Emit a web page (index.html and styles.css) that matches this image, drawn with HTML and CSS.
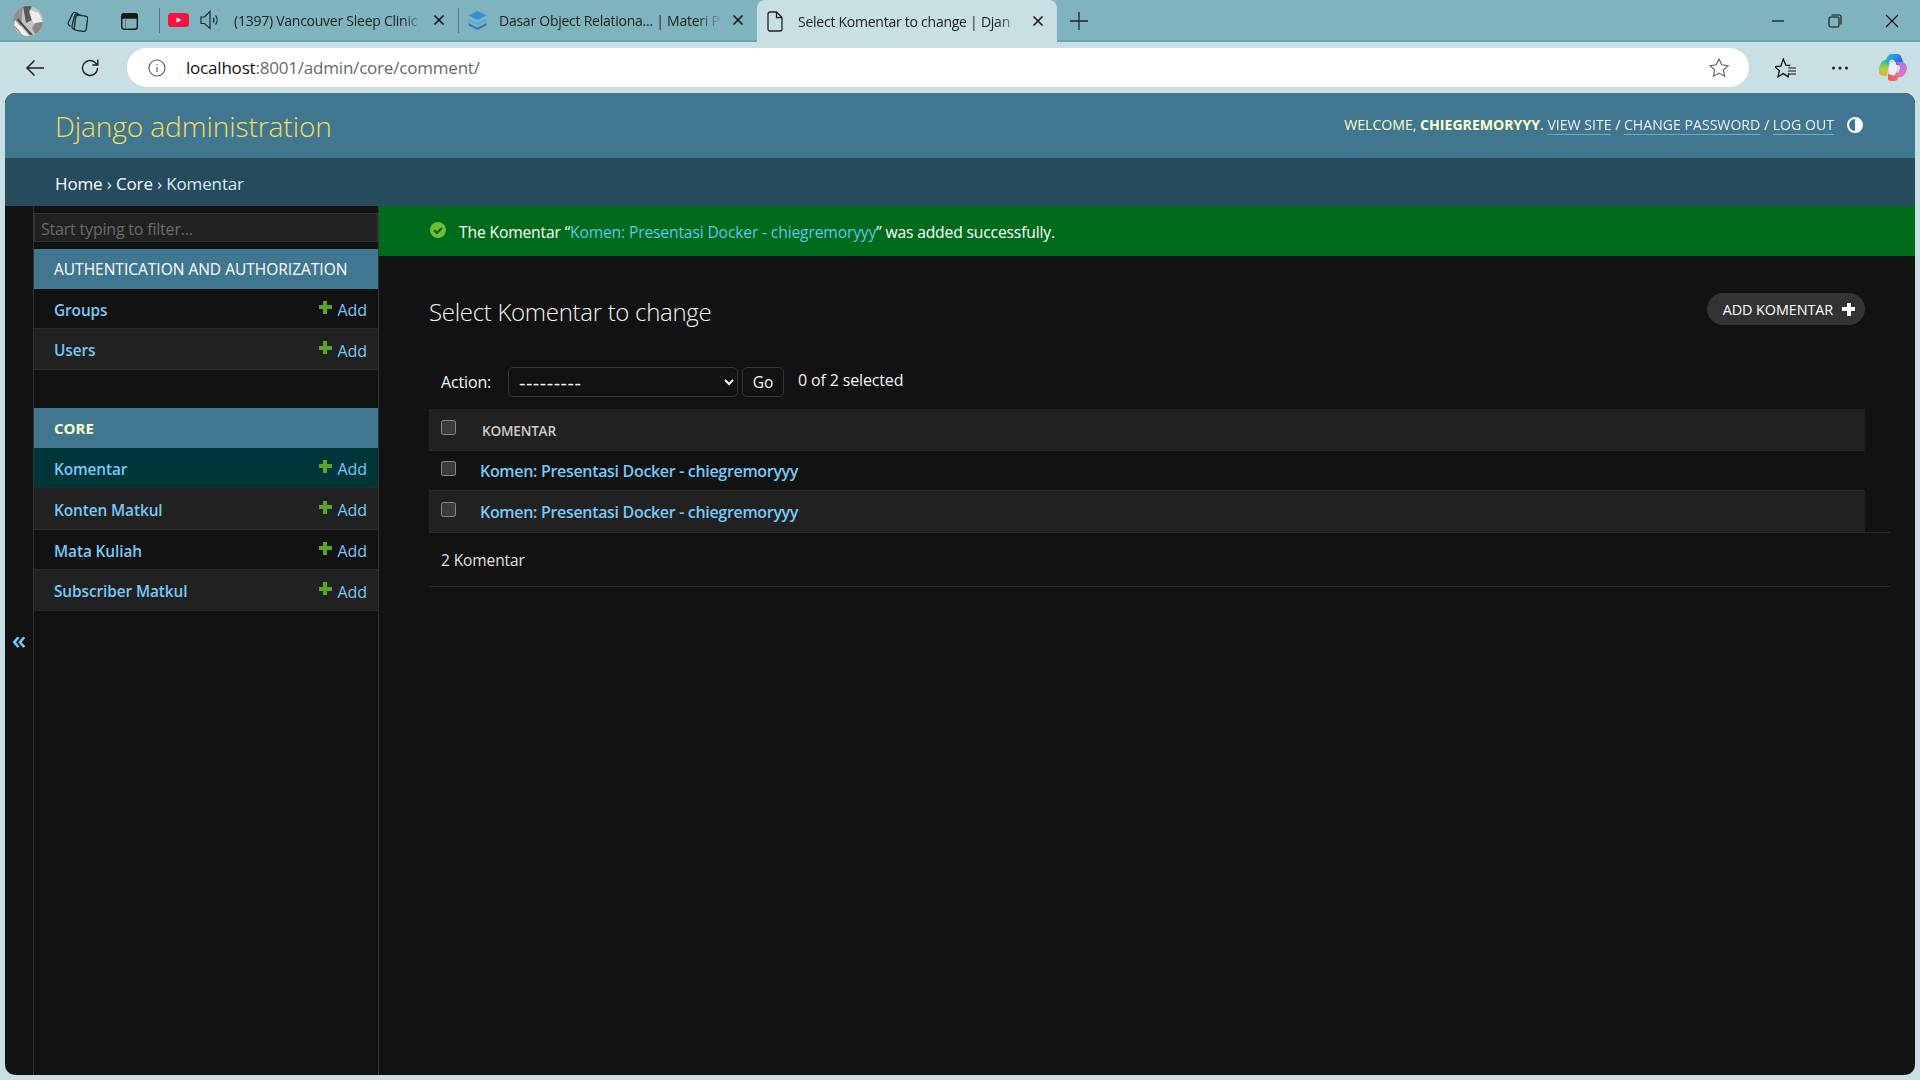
FILE: index.html
```html
<!DOCTYPE html>
<html lang="en">
<head>
  <meta charset="UTF-8" />
  <meta name="viewport" content="width=device-width, initial-scale=1.0" />
  <title>Select Komentar to change | Django site admin</title>
  <link rel="stylesheet" href="styles.css">
</head>
<body>
  <!-- Browser tabs -->
  <div class="tabbar">
    <svg class="avatar" viewBox="0 0 30 30">
      <defs>
        <clipPath id="avclip"><circle cx="15" cy="15" r="15"/></clipPath>
      </defs>
      <g clip-path="url(#avclip)">
        <rect width="30" height="30" fill="#c4c4c4"/>
        <path d="M0 0h10L7 30H0z" fill="#8f8f8f"/>
        <path d="M10 0h9l-3 6 3 8-6 3z" fill="#5a5a5a"/>
        <path d="M17 4l9 3 3 9-8 2-3-6z" fill="#ececec"/>
        <path d="M2 14l14 16h-5L1 19zM1 21l8 9H4L0 25z" fill="#f4f4f4"/>
        <path d="M5 12l15 17h-3L4 14z" fill="#4a4a4a"/>
        <path d="M22 17l8-1v9l-7 5-4-8z" fill="#868686"/>
      </g>
    </svg>
    <svg class="bar-icon workspaces" viewBox="0 0 21 21" fill="none" stroke="#1f2a2c" stroke-width="1.300">
      <rect x="8" y="4.500" width="12" height="15.500" rx="2.500" transform="rotate(8 14 12)"/>
      <path d="M7.500 18.500l-1.200-.6a2.500 2.500 0 0 1-1.300-2.900L7.500 5a2.500 2.500 0 0 1 3-1.700l3.500 1"/>
      <path d="M3.500 15.500l-1.400-1.200a2.500 2.500 0 0 1-.6-3L5.200 3.200A2.500 2.500 0 0 1 8.400 1.600l3 1.200"/>
    </svg>
    <svg class="bar-icon tab-actions" viewBox="0 0 17 17" fill="none" stroke="#1a1a1a" stroke-width="1.400">
      <rect x="0.700" y="0.700" width="15.600" height="15.600" rx="2.500"/>
      <path d="M0.700 3.200a2.500 2.500 0 0 1 2.500-2.500h10.600a2.500 2.500 0 0 1 2.500 2.500v1.800H0.700z" fill="#1a1a1a"/>
      <path d="M4.500 5v11" stroke="#4f6b70" stroke-width="0.800"/>
    </svg>
    <span class="tab-sep first"></span>

    <div class="tab">
      <svg class="yt" viewBox="0 0 21 14"><rect width="21" height="14" rx="3.500" fill="#f5143f"/><path d="M8.500 4.500l5 2.500-5 2.500z" fill="#fff"/></svg>
      <svg class="speaker" viewBox="0 0 20 20" fill="none" stroke="#1f2a2c" stroke-width="1.200"><path d="M1 7v6.500h3.500l5.500 5V1.500L4.500 7z"/><path d="M13 7.500a4 4 0 0 1 0 5M15.500 5.500a7 7 0 0 1 0 9"/></svg>
      <span class="tab-title audio">(1397) Vancouver Sleep Clinic</span>
      <svg class="tab-close" viewBox="0 0 12 12"><path d="M1.500 1.500l9 9M10.500 1.500l-9 9"/></svg>
    </div>
    <span class="tab-sep"></span>
    <div class="tab second">
      <svg class="stack" viewBox="0 0 21 21"><path d="M10.500 1l9 4.500-9 4.500-9-4.500z" fill="#3b8ed8"/><path d="M1.500 8.500l9 4.500 9-4.500v2.500l-9 4.500-9-4.500z" fill="#5aa6e6"/><path d="M1.500 13l9 4.500 9-4.500v2.500l-9 4.500-9-4.500z" fill="#2f7cc4"/></svg>
      <span class="tab-title">Dasar Object Relationa... | Materi P</span>
      <svg class="tab-close" viewBox="0 0 12 12"><path d="M1.500 1.500l9 9M10.500 1.500l-9 9"/></svg>
    </div>
    <div class="tab active">
      <svg class="doc" viewBox="0 0 16 21" fill="none" stroke="#222" stroke-width="1.300"><path d="M2.500 1h7l5.500 5.500V18a2 2 0 0 1-2 2H2.500a2 2 0 0 1-1.500-2V3a2 2 0 0 1 1.500-2z"/><path d="M9.500 1v5.500H15"/></svg>
      <span class="tab-title">Select Komentar to change | Djan</span>
      <svg class="tab-close" viewBox="0 0 12 12"><path d="M1.500 1.500l9 9M10.500 1.500l-9 9"/></svg>
    </div>
    <svg class="new-tab" viewBox="0 0 18 18"><path d="M9 0v18M0 9h18" stroke="#222" stroke-width="1.300"/></svg>

    <div class="window-controls">
      <svg viewBox="0 0 14 14"><path d="M1 7h12" stroke="#111" stroke-width="1.200"/></svg>
      <svg viewBox="0 0 14 14" fill="none" stroke="#111" stroke-width="1.100"><rect x="1" y="3" width="10" height="10" rx="1.800"/><path d="M3.500 1h7.500a2 2 0 0 1 2 2v7.500"/></svg>
      <svg viewBox="0 0 14 14"><path d="M1 1l12 12M13 1L1 13" stroke="#111" stroke-width="1.200"/></svg>
    </div>
  </div>

  <!-- Address bar -->
  <div class="toolbar">
    <svg class="tool back" viewBox="0 0 20 20" fill="none" stroke="#222" stroke-width="1.500"><path d="M19 10H2M9.500 2.500L2 10l7.500 7.500"/></svg>
    <svg class="tool reload" viewBox="0 0 20 20" fill="none" stroke="#222" stroke-width="1.400"><path d="M17.500 10a7.500 7.500 0 1 1-2.500-5.600l2.500 2.300"/><path d="M17.800 1.500v5.500h-5.500"/></svg>
    <div class="addressbar">
      <svg class="info" viewBox="0 0 18 18" fill="none" stroke="#555" stroke-width="1.100"><circle cx="9" cy="9" r="8"/><path d="M9 8v5M9 5v1.300"/></svg>
      <span class="url"><span class="host">localhost</span>:8001/admin/core/comment/</span>
      <svg class="star" viewBox="0 0 22 22" fill="none" stroke="#666" stroke-width="1.200"><path d="M11 2l2.700 5.800 6.300.8-4.600 4.300 1.200 6.300L11 16.100l-5.600 3.100 1.200-6.300L2 8.600l6.300-.8z"/></svg>
    </div>
    <svg class="tool favs" viewBox="0 0 21 20" fill="none" stroke="#111" stroke-width="1.300"><path d="M13.500 15.500l-.2 3.300-5-3.200-5.300 3.200 1.300-6-4.500-4.100 6-.6L8.300 1l2.500 6.100 4.500.4"/><path d="M13 10h8M13 13h8M13 16h8" stroke-width="1.200"/></svg>
    <svg class="tool dots" viewBox="0 0 18 4"><circle cx="2.500" cy="2" r="1.500"/><circle cx="9" cy="2" r="1.500"/><circle cx="15.500" cy="2" r="1.500"/></svg>
    <svg class="copilot" viewBox="0 0 28 27">
      <defs>
        <linearGradient id="cp1" x1="0" y1="0" x2="1" y2="0.600"><stop offset="0" stop-color="#22c4e0"/><stop offset="1" stop-color="#2a5fe0"/></linearGradient>
        <linearGradient id="cp2" x1="0" y1="0" x2="1" y2="1"><stop offset="0" stop-color="#a06cf0"/><stop offset="1" stop-color="#f078c0"/></linearGradient>
        <linearGradient id="cp3" x1="0" y1="0" x2="0" y2="1"><stop offset="0" stop-color="#2cc070"/><stop offset="0.600" stop-color="#b8d040"/><stop offset="1" stop-color="#f8a040"/></linearGradient>
        <linearGradient id="cp4" x1="0" y1="0" x2="1" y2="0"><stop offset="0" stop-color="#f05a4a"/><stop offset="1" stop-color="#f07090"/></linearGradient>
      </defs>
      <path d="M7 6C4 6 2 8 1 11L0 15c-1 4 1 7 5 7h3l2-12z" fill="url(#cp3)"/>
      <path d="M12 0h6c2 0 4 1 4.500 3.500L25 11h-8l-1.500-4c-.5-1-1-1.500-2.500-1.500-1.500 0-2.500 1-3 2.500l-1 3-2-5c1-3 3-6 5-6z" fill="url(#cp1)"/>
      <path d="M17 8h5c3 0 5.500 2 6 5 .3 4-2 8-5 10h-5l3-8c.5-2 0-3-1-3.500z" fill="url(#cp2)"/>
      <path d="M9 20l6 2 3-4 3 2-2 5c-.8 1.300-2 2-3.500 2H12c-2 0-3.500-1-3-3z" fill="url(#cp4)"/>
      <path d="M12 8h4.500l2 6-2.500 6h-5l-1-6z" fill="#f0ecfa"/>
    </svg>
  </div>

  <!-- Admin page -->
  <div class="admin">
    <header class="site-header">
      <h1 class="brand">Django administration</h1>
      <div class="user-tools">
        <span>Welcome, <strong>chiegremoryyy</strong>. <a href="#">View site</a> / <a href="#">Change password</a> / <a href="#">Log out</a></span>
        <svg class="theme" viewBox="0 0 16 16"><circle cx="8" cy="8" r="7" fill="none" stroke="#fff" stroke-width="2"/><path d="M8 1a7 7 0 0 1 0 14z" fill="#fff"/></svg>
      </div>
    </header>
    <nav class="breadcrumbs"><a href="#">Home</a> › <a href="#">Core</a> › Komentar</nav>

    <div class="main">
      <div class="toggle-col"><span class="toggle">«</span></div>
      <aside class="sidebar">
        <input class="nav-filter" type="text" placeholder="Start typing to filter..." />

        <div class="app-caption">Authentication and Authorization</div>
        <div class="model-row"><a class="model" href="#">Groups</a><a class="add" href="#"><i class="plus"></i>Add</a></div>
        <div class="model-row alt"><a class="model" href="#">Users</a><a class="add" href="#"><i class="plus"></i>Add</a></div>

        <div class="app-caption current">Core</div>
        <div class="model-row selected"><a class="model" href="#">Komentar</a><a class="add" href="#"><i class="plus"></i>Add</a></div>
        <div class="model-row alt tall"><a class="model" href="#">Konten Matkul</a><a class="add" href="#"><i class="plus"></i>Add</a></div>
        <div class="model-row"><a class="model" href="#">Mata Kuliah</a><a class="add" href="#"><i class="plus"></i>Add</a></div>
        <div class="model-row alt"><a class="model" href="#">Subscriber Matkul</a><a class="add" href="#"><i class="plus"></i>Add</a></div>
      </aside>

      <main class="content">
        <div class="message">
          <svg class="ok" viewBox="0 0 16 16"><circle cx="8" cy="8" r="8" fill="#6cbf2f"/><path d="M4.200 8.300l2.700 2.700 4.900-5" fill="none" stroke="#0b5a14" stroke-width="2"/></svg>
          <span>The Komentar “<a href="#">Komen: Presentasi Docker - chiegremoryyy</a>” was added successfully.</span>
        </div>

        <div class="page">
          <div class="page-head">
            <h2 class="page-title">Select Komentar to change</h2>
            <a class="add-btn" href="#">Add Komentar<i class="add-plus"></i></a>
          </div>

          <form class="actions">
            <label class="action-label">Action:</label>
            <select class="action-select"><option>---------</option></select>
            <button class="go" type="button">Go</button>
            <span class="counter">0 of 2 selected</span>
          </form>

          <table class="results">
            <thead>
              <tr><th class="check"><input type="checkbox" /></th><th class="col-name">Komentar</th></tr>
            </thead>
            <tbody>
              <tr><td class="check"><input type="checkbox" /></td><td><a href="#">Komen: Presentasi Docker - chiegremoryyy</a></td></tr>
              <tr class="alt"><td class="check"><input type="checkbox" /></td><td><a href="#">Komen: Presentasi Docker - chiegremoryyy</a></td></tr>
            </tbody>
          </table>
          <p class="paginator">2 Komentar</p>
        </div>
      </main>
    </div>
  </div>
</body>
</html>
```

FILE: styles.css
```css
* {
  margin: 0;
  padding: 0;
  box-sizing: border-box;
}

html, body {
  height: 100%;
  overflow: hidden;
  font-family: 'Open Sans', 'Noto Sans', sans-serif;
  background: #c8dfe3;
  color: #111;
}

body {
  display: flex;
  flex-direction: column;
}

a {
  text-decoration: none;
}

/* Browser chrome */
.tabbar {
  height: 42px;
  flex: none;
  display: flex;
  align-items: center;
  background: #7fb4bf;
  box-shadow: inset 0 -2px 0 #6fa3ae;
  font-size: 14px;
  letter-spacing: -0.25px;
  color: #222;
}

.avatar {
  width: 30px;
  height: 30px;
  margin-left: 13px;
}

.bar-icon.workspaces {
  width: 21px;
  height: 21px;
  margin-left: 24px;
}

.bar-icon.tab-actions {
  width: 17px;
  height: 17px;
  margin-left: 33px;
}

.tab-sep {
  width: 1px;
  height: 25px;
  background: #52777f;
  margin-bottom: 2px;
}

.tab-sep.first {
  margin-left: 21px;
}

.tab {
  display: flex;
  align-items: center;
  width: 298px;
  height: 42px;
  padding: 0 13px 2px 8px;
}

.tab.second {
  width: 298px;
  padding-left: 8px;
}

.tab.active {
  width: 300px;
  background: #c8dfe3;
  border-radius: 8px 8px 0 0;
  padding-bottom: 0;
  padding-left: 10px;
}

.yt {
  width: 21px;
  height: 14px;
  flex: none;
}

.speaker {
  width: 20px;
  height: 20px;
  flex: none;
  margin: 0 14px 0 11px;
}

.stack {
  width: 21px;
  height: 21px;
  flex: none;
  margin-right: 11px;
}

.doc {
  width: 16px;
  height: 21px;
  flex: none;
  margin-right: 15px;
}

.tab-title {
  flex: 1;
  min-width: 0;
  white-space: nowrap;
  overflow: hidden;
  -webkit-mask-image: linear-gradient(to right, #000 88%, transparent 100%);
  mask-image: linear-gradient(to right, #000 88%, transparent 100%);
}

.tab-close {
  width: 12px;
  height: 12px;
  flex: none;
  margin-left: 8px;
  stroke: #111;
  stroke-width: 1.500;
}

.new-tab {
  width: 18px;
  height: 18px;
  margin-left: 13px;
}

.window-controls {
  margin-left: auto;
  display: flex;
  align-items: center;
  gap: 43px;
  padding-right: 21px;
}

.window-controls svg {
  width: 14px;
  height: 14px;
}

.toolbar {
  height: 51px;
  flex: none;
  display: flex;
  align-items: center;
}

.tool {
  flex: none;
}

.tool.back {
  width: 20px;
  height: 20px;
  margin-left: 25px;
}

.tool.reload {
  width: 20px;
  height: 20px;
  margin-left: 35px;
}

.addressbar {
  width: 1622px;
  height: 39px;
  margin-left: 27px;
  flex: none;
  display: flex;
  align-items: center;
  padding: 0 19px 0 22px;
  background: #fff;
  border-radius: 20px;
  box-shadow: 0 1px 1px #d4d4d8;
  font-size: 17px;
  letter-spacing: -0.2px;
  color: #5f6b70;
}

.info {
  width: 18px;
  height: 18px;
  margin-right: 20px;
  margin-left: -1px;
}

.url {
  flex: 1;
}

.host {
  color: #111;
}

.star {
  width: 22px;
  height: 22px;
}

.favs {
  width: 21px;
  height: 20px;
  margin-left: 26px;
}

.dots {
  width: 18px;
  height: 4px;
  margin-left: 35px;
  fill: #222;
}

.copilot {
  width: 28px;
  height: 27px;
  margin-left: 30px;
}

/* Django admin */
.admin {
  flex: 1;
  min-height: 0;
  margin: 0 5px 5px;
  display: flex;
  flex-direction: column;
  background: #121212;
  border-radius: 10px;
  overflow: hidden;
  color: #f5f5f5;
}

.site-header {
  height: 65px;
  flex: none;
  display: flex;
  align-items: center;
  justify-content: space-between;
  padding: 0 52px 0 50px;
  background: #417690;
}

.brand {
  padding-top: 1px;
  font-size: 28.100px;
  font-weight: 300;
  letter-spacing: -0.1px;
  color: #f5dd5d;
}

.user-tools {
  display: flex;
  align-items: center;
  padding-bottom: 2px;
  font-size: 14.100px;
  text-transform: uppercase;
  color: #ffc;
}

.user-tools strong {
  font-weight: 700;
}

.user-tools a {
  color: #fff;
  opacity: 0.9;
  border-bottom: 1px solid #79aec8;
}

.theme {
  width: 16px;
  height: 16px;
  margin-left: 13px;
}

.breadcrumbs {
  height: 48px;
  flex: none;
  padding: 3px 0 0 50px;
  line-height: 45px;
  background: #264b5d;
  font-size: 17px;
  color: #dcebf2;
  letter-spacing: -0.15px;
}

.breadcrumbs a {
  color: #fff;
}

.main {
  flex: 1;
  min-height: 0;
  display: flex;
}

.toggle-col {
  width: 29px;
  flex: none;
  display: flex;
  align-items: flex-start;
  justify-content: center;
  border-right: 1px solid #353535;
  padding-top: 418px;
}

.toggle {
  font-size: 26px;
  font-weight: 600;
  line-height: 30px;
  color: #78c8f8;
}

.sidebar {
  width: 345px;
  flex: none;
  border-right: 1px solid #353535;
  padding-top: 7px;
}

.nav-filter {
  display: block;
  width: 344px;
  height: 29px;
  padding: 2px 6px 0;
  margin-bottom: 7px;
  font: inherit;
  font-size: 16px;
  letter-spacing: -0.2px;
  color: #ddd;
  background: #212121;
  border: 1px solid #353535;
  border-radius: 0;
  outline: none;
}

.nav-filter::placeholder {
  color: #6b6b6b;
  opacity: 1;
}

.app-caption {
  height: 40px;
  display: flex;
  align-items: center;
  padding-left: 20px;
  background: #417690;
  font-size: 15.500px;
  text-transform: uppercase;
  color: #fff;
}

.app-caption.current {
  margin-top: 38px;
  font-weight: 700;
  font-size: 15px;
  color: #ffc;
}

.model-row {
  height: 40px;
  display: flex;
  align-items: center;
  justify-content: space-between;
  padding: 3px 11px 0 20px;
  border-bottom: 1px solid #2a2a2a;
  font-size: 15.400px;
}

.model-row.alt {
  height: 41px;
  background: #212121;
}

.model-row.tall {
  height: 42px;
}

.model-row.selected {
  background: #00363a;
}

.model {
  font-weight: 600;
  letter-spacing: -0.1px;
  color: #78c8f8;
}

.add {
  display: flex;
  align-items: center;
  font-size: 16px;
  letter-spacing: -0.1px;
  color: #78c8f8;
}

.plus {
  width: 13px;
  height: 13px;
  margin: -6px 6px 0 0;
  background:
    linear-gradient(#5fa225, #5fa225) center / 13px 4px no-repeat,
    linear-gradient(#5fa225, #5fa225) center / 4px 13px no-repeat;
}

.content {
  flex: 1;
  min-width: 0;
  display: flex;
  flex-direction: column;
}

.message {
  height: 50px;
  flex: none;
  display: flex;
  align-items: center;
  padding: 2px 0 0 51px;
  background: #006b1b;
  font-size: 15.650px;
  letter-spacing: -0.15px;
  color: #fff;
}

.message a {
  color: #5ac8e8;
}

.ok {
  width: 16px;
  height: 16px;
  margin: -4px 13px 0 0;
}

.page {
  padding: 37px 50px 0;
}

.page-head {
  display: flex;
  justify-content: space-between;
  align-items: flex-start;
}

.page-title {
  font-size: 24px;
  font-weight: 300;
  line-height: 38px;
  letter-spacing: -0.3px;
  color: #f5f5f5;
}

.add-btn {
  display: flex;
  align-items: center;
  height: 32px;
  padding: 0 10px 0 16px;
  border-radius: 16px;
  background: #333;
  font-size: 14.400px;
  letter-spacing: -0.1px;
  text-transform: uppercase;
  color: #fff;
}

.add-plus {
  width: 13px;
  height: 13px;
  margin-left: 9px;
  background:
    linear-gradient(#fff, #fff) center / 13px 4px no-repeat,
    linear-gradient(#fff, #fff) center / 4px 13px no-repeat;
}

.actions {
  display: flex;
  align-items: center;
  height: 30px;
  margin-top: 36px;
  padding-left: 12px;
  font-size: 16px;
  letter-spacing: -0.15px;
  color: #f5f5f5;
}

.action-label {
  width: 67px;
  flex: none;
}

.action-select {
  width: 230px;
  height: 30px;
  padding: 0 2px 0 6px;
  color-scheme: dark;
  font: inherit;
  font-size: 20px;
  letter-spacing: 0.500px;
  color: #f5f5f5;
  background: #121212;
  border: 1px solid #353535;
  border-radius: 5px;
}

.go {
  width: 42px;
  height: 30px;
  margin-left: 4px;
  font: inherit;
  font-size: 15.500px;
  color: #f5f5f5;
  background: #121212;
  border: 1px solid #353535;
  border-radius: 5px;
}

.counter {
  margin: -5px 0 0 14px;
}

.results {
  width: 100%;
  margin-top: 12px;
  border-collapse: collapse;
  font-size: 16px;
}

.results th {
  height: 41px;
  padding: 2px 0 0;
  background: #212121;
  text-align: left;
  border-bottom: 1px solid #2a2a2a;
}

.results td {
  height: 40px;
  padding: 2px 0 0;
  border-bottom: 1px solid #2a2a2a;
}

.results .alt td {
  height: 42px;
  background: #212121;
  border-bottom: 0;
}

.results .check {
  width: 51px;
  padding: 0 0 0 12px;
}

.check input {
  display: block;
  width: 15px;
  height: 15px;
  margin-top: -4px;
  color-scheme: dark;
}

.col-name {
  padding-left: 2px !important;
  font-size: 13.600px;
  font-weight: 600;
  letter-spacing: -0.2px;
  text-transform: uppercase;
  color: #ccc;
}

.results a {
  font-weight: 600;
  letter-spacing: -0.32px;
  color: #78c8f8;
}

.paginator {
  height: 55px;
  margin-right: -25px;
  padding: 1px 0 0 12px;
  display: flex;
  align-items: center;
  border-top: 1px solid #2a2a2a;
  border-bottom: 1px solid #2a2a2a;
  font-size: 15.500px;
  letter-spacing: -0.1px;
  color: #e0e0e0;
}
```
